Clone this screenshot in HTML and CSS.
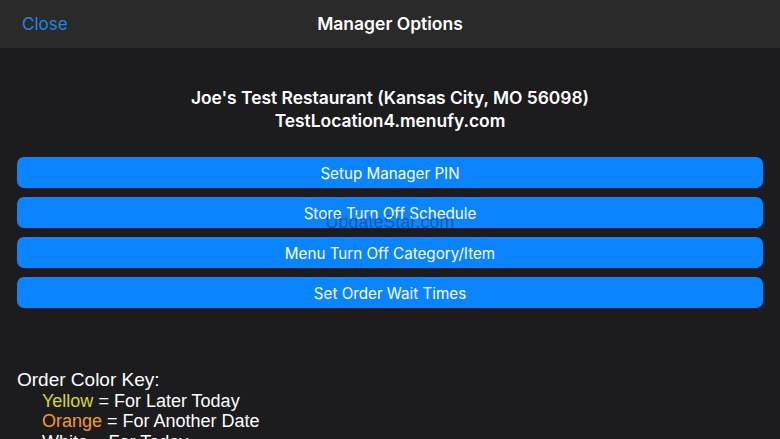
FILE: index.html
```
<!DOCTYPE html>
<html>
<head>
<meta charset="utf-8">
<link rel="stylesheet" href="styles.css">
</head>
<body>
<div class="screen">
  <header class="navbar">
    <span class="close">Close</span>
    <span class="nav-title">Manager Options</span>
  </header>
  <main class="content">
    <div class="store">
      <div>Joe's Test Restaurant (Kansas City, MO 56098)</div>
      <div>TestLocation4.menufy.com</div>
    </div>
    <div class="buttons">
      <div class="btn">Setup Manager PIN</div>
      <div class="btn">Store Turn Off Schedule</div>
      <div class="btn">Menu Turn Off Category/Item</div>
      <div class="btn">Set Order Wait Times</div>
    </div>
    <div class="key">
      <div class="key-title">Order Color Key:</div>
      <div class="key-item"><span class="yellow">Yellow</span> = For Later Today</div>
      <div class="key-item"><span class="orange">Orange</span> = For Another Date</div>
      <div class="key-item">White = For Today</div>
    </div>
  </main>
  <div class="watermark">UpdateStar.com</div>
</div>
</body>
</html>
```
FILE: styles.css
```
html, body {
  margin: 0;
  padding: 0;
  background: #1c1c1e;
  overflow: hidden;
}
.screen {
  position: relative;
  width: 780px;
  height: 439px;
  overflow: hidden;
  background: #1c1c1e;
  font-family: Inter, "Liberation Sans", sans-serif;
  color: #ffffff;
}
.navbar {
  height: 48px;
  background: #2a2a2b;
  display: flex;
  align-items: center;
  justify-content: center;
  position: relative;
}
.close {
  position: absolute;
  left: 22px;
  top: 13px;
  font-size: 17px;
  color: #1f86e6;
  line-height: 22px;
}
.nav-title {
  font-size: 17.5px;
  font-weight: 600;
  line-height: 22px;
}
.content {
  padding: 38px 17px 0;
}
.store {
  text-align: center;
  font-size: 17.4px;
  font-weight: 600;
  line-height: 23px;
}
.buttons {
  margin-top: 25px;
  display: flex;
  flex-direction: column;
  gap: 9px;
}
.btn {
  height: 31px;
  border-radius: 7px;
  background: #0a84ff;
  display: flex;
  align-items: center;
  justify-content: center;
  font-size: 15.2px;
  color: #ffffff;
  padding-top: 2px;
  box-sizing: border-box;
}
.key {
  margin-top: 62px;
  font-family: "Liberation Sans", Arial, sans-serif;
  font-size: 18px;
  line-height: 20.5px;
}
.key-title {
  font-size: 19px;
}
.key-item {
  padding-left: 25px;
}
.yellow { color: #d8d82a; }
.orange { color: #f09a2a; }
.watermark {
  position: absolute;
  left: 0;
  right: 0;
  top: 212px;
  text-align: center;
  font-family: "Liberation Sans", Arial, sans-serif;
  font-size: 18px;
  color: rgba(30, 40, 80, 0.45);
  pointer-events: none;
}
```
